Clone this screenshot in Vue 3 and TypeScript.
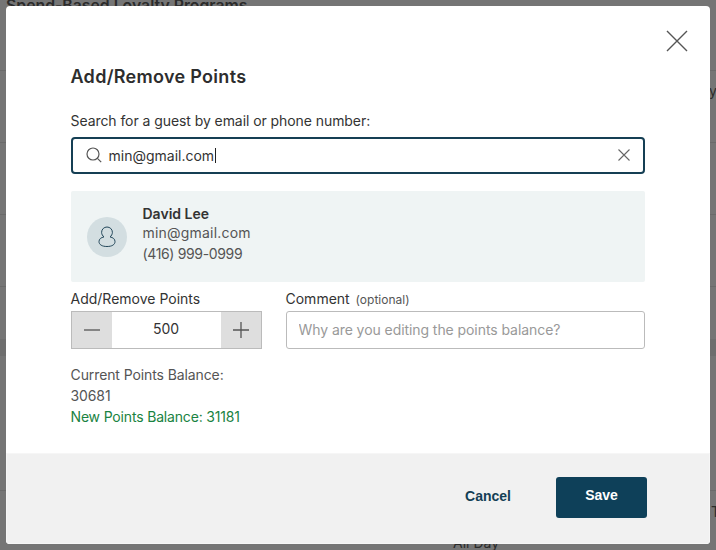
<template>
  <div class="page">
    <div class="backdrop">
      <h1 class="page-title">Spend-Based Loyalty Programs</h1>
      <div class="rule rule-a"></div>
      <div class="peek peek-y">y</div>
      <div class="rule rule-b"></div>
      <div class="rule rule-d"></div>
      <div class="rule rule-e"></div>
      <div class="band"></div>
      <div class="rule rule-c"></div>
      <div class="peek peek-t">T</div>
      <div class="peek peek-day">All Day</div>
    </div>

    <div class="modal">
      <button class="close" type="button" aria-label="Close">
        <svg width="22" height="22" viewBox="0 0 22 22" fill="none">
          <path d="M1 1l20 20M21 1L1 21" stroke="#555" stroke-width="1.4" />
        </svg>
      </button>

      <div class="body">
        <h2 class="title">Add/Remove Points</h2>

        <label class="search-label">Search for a guest by email or phone number:</label>
        <div class="search">
          <svg class="search-icon" width="16" height="16" viewBox="0 0 16 16" fill="none">
            <circle cx="7" cy="7" r="6" stroke="#555" stroke-width="1.2" />
            <path d="M11.4 11.4l3.8 3.8" stroke="#555" stroke-width="1.2" />
          </svg>
          <span class="search-text">{{ query }}</span><span class="caret"></span>
          <svg class="search-clear" width="12" height="12" viewBox="0 0 12 12" fill="none">
            <path d="M.5.5l11 11M11.5.5l-11 11" stroke="#666" stroke-width="1.1" />
          </svg>
        </div>

        <div class="guest">
          <div class="avatar">
            <svg width="18" height="22" viewBox="0 0 18 22" fill="none">
              <path
                d="M9 1C6 1 3.600 3.300 3.600 6.300c0 1.900 1 3.600 2.400 4.600C3 11.500 1 13 1 15.600 1 18.600 4 20.500 9 20.500s8-1.900 8-4.900c0-2.600-2-4.100-5-4.700 1.400-1 2.400-2.700 2.400-4.600C14.400 3.300 12 1 9 1z"
                stroke="#23475a"
                stroke-width="1"
              />
            </svg>
          </div>
          <div class="guest-info">
            <div class="guest-name">David Lee</div>
            <div class="guest-line">{{ query }}</div>
            <div class="guest-line guest-phone">(416) 999-0999</div>
          </div>
        </div>

        <div class="fields">
          <div class="points-col">
            <div class="field-label">Add/Remove Points</div>
            <div class="stepper">
              <button class="step" type="button" aria-label="Remove" @click="amount -= 100">
                <svg width="16" height="16" viewBox="0 0 16 16"><path d="M0 8h16" stroke="#555" stroke-width="1.3" /></svg>
              </button>
              <div class="step-value">{{ amount }}</div>
              <button class="step" type="button" aria-label="Add" @click="amount += 100">
                <svg width="16" height="16" viewBox="0 0 16 16"><path d="M0 8h16M8 0v16" stroke="#555" stroke-width="1.3" /></svg>
              </button>
            </div>
          </div>
          <div class="comment-col">
            <div class="field-label">Comment <span class="optional">(optional)</span></div>
            <input class="comment" type="text" placeholder="Why are you editing the points balance?" />
          </div>
        </div>

        <div class="balance">
          <div>Current Points Balance:</div>
          <div>{{ current }}</div>
          <div class="balance-new">New Points Balance: {{ current + amount }}</div>
        </div>
      </div>

      <div class="footer">
        <button class="cancel" type="button">Cancel</button>
        <button class="save" type="button">Save</button>
      </div>
    </div>
  </div>
</template>

<script setup lang="ts">
import { ref } from 'vue'

const query = ref<string>('min@gmail.com')
const amount = ref<number>(500)
const current = 30681
</script>

<style>
html,
body {
  margin: 0;
  height: 100%;
  overflow: hidden;
}
</style>

<style scoped>
.page {
  background: #757575;
  font-family: Inter, 'Liberation Sans', sans-serif;
  height: 550px;
  overflow: hidden;
  position: relative;
  width: 716px;
}

.backdrop {
  inset: 0;
  position: absolute;
}

.page-title {
  color: #2b2b2b;
  font-size: 15.8px;
  font-weight: 600;
  left: 6px;
  margin: 0;
  position: absolute;
  top: -4px;
}

.rule {
  background: #6a6a6a;
  height: 1px;
  left: 0;
  position: absolute;
  right: 0;
}

.rule-a {
  top: 70px;
}

.rule-b {
  top: 142px;
}

.rule-d {
  top: 214px;
}

.rule-e {
  top: 286px;
}

.rule-c {
  top: 490px;
}

.band {
  background: #6e6e6e;
  height: 17px;
  left: 0;
  position: absolute;
  right: 0;
  top: 339px;
}

.peek {
  color: #2b2b2b;
  font-size: 14px;
  position: absolute;
}

.peek-y {
  left: 709px;
  top: 82px;
}

.peek-t {
  left: 711px;
  top: 503px;
}

.peek-day {
  left: 453px;
  top: 534px;
}

.modal {
  background: #fff;
  border-radius: 4px;
  display: flex;
  flex-direction: column;
  height: 538px;
  left: 6px;
  overflow: hidden;
  position: absolute;
  top: 6px;
  width: 704px;
}

.close {
  background: none;
  border: 0;
  padding: 0;
  position: absolute;
  right: 22px;
  top: 24px;
}

.close svg,
.step svg,
.avatar svg {
  display: block;
}

.body {
  flex: 1;
  padding: 60px 65px 0 64.5px;
}

.title {
  color: #2d2d2d;
  font-size: 18px;
  font-weight: 600;
  letter-spacing: 0.3px;
  line-height: 22px;
  margin: 0 0 24px;
}

.search-label {
  color: #333;
  display: block;
  font-size: 14px;
  letter-spacing: -0.07px;
  line-height: 18px;
  margin-bottom: 7px;
}

.search {
  align-items: center;
  border: 2px solid #153f54;
  border-radius: 4px;
  box-sizing: border-box;
  display: flex;
  height: 37px;
  padding: 0 13px 1px;
}

.search-icon {
  flex: none;
  margin-right: 7px;
}

.search-text {
  color: #333;
  font-size: 14px;
}

.caret {
  background: #222;
  height: 15px;
  margin-left: 1px;
  width: 1px;
}

.search-clear {
  margin-left: auto;
}

.guest {
  align-items: center;
  background: #eff4f4;
  border-radius: 2px;
  display: flex;
  gap: 16px;
  height: 91px;
  margin-top: 17px;
  padding-left: 16px;
}

.avatar {
  align-items: center;
  background: #d3dee1;
  border-radius: 50%;
  display: flex;
  height: 40px;
  justify-content: center;
  width: 40px;
}

.guest-info {
  color: #555;
  font-size: 14px;
  line-height: 19px;
  margin-bottom: 5px;
}

.guest-name {
  color: #333;
  font-weight: 600;
}

.guest-line {
  letter-spacing: 0.2px;
}

.guest-phone {
  letter-spacing: -0.35px;
  line-height: 23px;
}

.fields {
  display: grid;
  gap: 24px;
  grid-template-columns: 191px 359px;
  margin-top: 8px;
}

.field-label {
  color: #333;
  font-size: 14px;
  height: 18px;
  line-height: 18px;
  margin-bottom: 3px;
}

.optional {
  color: #555;
  font-size: 12px;
  margin-left: 2px;
}

.stepper {
  border: 1px solid #bbb;
  box-sizing: border-box;
  display: flex;
  height: 38px;
}

.step {
  align-items: center;
  background: #dedede;
  border: 0;
  display: flex;
  flex: none;
  justify-content: center;
  padding: 0;
  width: 40px;
}

.step-value {
  color: #333;
  flex: 1;
  font-size: 14px;
  line-height: 34px;
  text-align: center;
}

.comment {
  border: 1px solid #bbb;
  border-radius: 3px;
  box-sizing: border-box;
  color: #333;
  display: block;
  font: inherit;
  font-size: 14px;
  height: 38px;
  letter-spacing: -0.07px;
  outline: none;
  padding: 0 12px 2px;
  width: 100%;
}

.comment::placeholder {
  color: #999;
}

.balance {
  color: #555;
  font-size: 14px;
  letter-spacing: -0.1px;
  line-height: 21px;
  margin-top: 15px;
}

.balance-new {
  color: #1a8342;
  letter-spacing: -0.17px;
}

.footer {
  align-items: center;
  background: #f1f1f1;
  border: 1px solid #f6f6f6;
  box-sizing: border-box;
  display: flex;
  flex: none;
  height: 91px;
  justify-content: flex-end;
  padding: 0 62px 3px 0;
}

.cancel,
.save {
  font-family: 'Liberation Sans', Arial, sans-serif;
  font-size: 14px;
  font-weight: 700;
}

.cancel {
  background: none;
  border: 0;
  color: #143f55;
  margin-right: 45px;
  padding: 0 0 3px;
}

.save {
  background: #0e4059;
  border: 0;
  border-radius: 3px;
  color: #fff;
  height: 41px;
  padding: 0 0 4px;
  width: 91px;
}
</style>
